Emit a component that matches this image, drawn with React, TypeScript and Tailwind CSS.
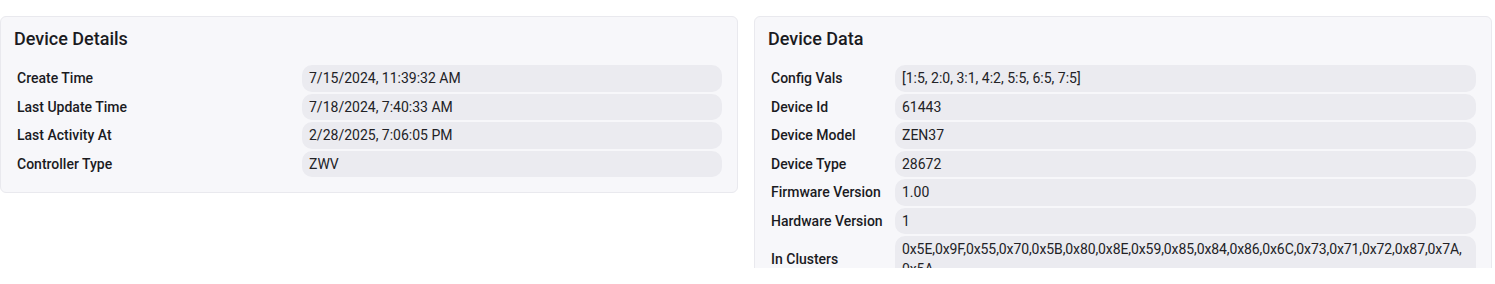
import React from "react";

type Row = { label: string; value: React.ReactNode; tight?: boolean };

const details: Row[] = [
	{ label: "Create Time", value: "7/15/2024, 11:39:32 AM" },
	{ label: "Last Update Time", value: "7/18/2024, 7:40:33 AM" },
	{ label: "Last Activity At", value: "2/28/2025, 7:06:05 PM" },
	{ label: "Controller Type", value: "ZWV" },
];

const clusters = "0x5E,0x9F,0x55,0x70,0x5B,0x80,0x8E,0x59,0x85,0x84,0x86,0x6C,0x73,0x71,0x72,0x87,0x7A,0x5A".split(",");

const data: Row[] = [
	{ label: "Config Vals", value: "[1:5, 2:0, 3:1, 4:2, 5:5, 6:5, 7:5]" },
	{ label: "Device Id", value: "61443" },
	{ label: "Device Model", value: "ZEN37" },
	{ label: "Device Type", value: "28672" },
	{ label: "Firmware Version", value: "1.00" },
	{ label: "Hardware Version", value: "1" },
	{
		label: "In Clusters",
		tight: true,
		value: clusters.map((c, i) => (
			<React.Fragment key={i}>
				{c}
				{i < clusters.length - 1 ? "," : ""}
				<wbr />
			</React.Fragment>
		)),
	},
	{ label: "Out Clusters", value: "" },
];

function InfoCard({ title, rows, labelCol }: { title: string; rows: Row[]; labelCol: string }) {
	return (
		<div className="bg-[#f7f7fa] border border-[#e9e9ee] rounded-md pl-[13px] pr-[15px] pt-[8px] pb-[15px] self-start">
			<h2 className="text-[18px] leading-7 font-medium text-[#1b1b1f] mb-[12px]">{title}</h2>
			<div className={`grid ${labelCol} gap-y-[2px]`}>
				{rows.map((r) => (
					<React.Fragment key={r.label}>
						<div className="flex items-center pl-[3px] text-sm font-medium text-[#1b1b1f]">{r.label}</div>
						<div
							className={
								r.tight
									? "bg-[#ebebf0] rounded-[10px] px-[7px] py-[3.25px] text-sm leading-5 text-[#222226] min-h-[26.5px] tracking-[-0.1px]"
									: "bg-[#ebebf0] rounded-[10px] px-[7px] py-[3.25px] text-sm leading-5 text-[#222226] min-h-[26.5px]"
							}
						>
							{r.value}
						</div>
					</React.Fragment>
				))}
			</div>
		</div>
	);
}

export default function App() {
	return (
		<div className="h-[268px] overflow-hidden bg-white" style={{ fontFamily: "Roboto, 'Noto Sans', sans-serif" }}>
			<div className="w-[1492px] pt-[16px] grid grid-cols-2 gap-4 items-start">
				<InfoCard title="Device Details" rows={details} labelCol="grid-cols-[288px_1fr]" />
				<InfoCard title="Device Data" rows={data} labelCol="grid-cols-[127px_1fr]" />
			</div>
		</div>
	);
}
